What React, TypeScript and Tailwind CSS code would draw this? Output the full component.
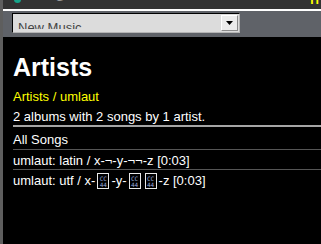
import React from "react";

function Tofu() {
  return (
    <span className="inline-block overflow-hidden w-[12px] h-[16px] border border-[#e8e8e8] align-[-4px] mx-[2px] pt-[2px] text-center leading-[5px] text-[6px] text-[#9ad] font-['DejaVu_Sans_Mono',monospace]">
      <span className="block">CC</span>
      <span className="block mt-[1px]">44</span>
    </span>
  );
}

export default function App() {
  return (
    <div className="w-[321px] h-[244px] overflow-hidden bg-black flex font-['Liberation_Sans',Arial,sans-serif]">
      <div className="w-[3px] shrink-0 bg-[#5e5e5e]" />
      <div className="flex-1 flex flex-col min-w-0">
        {/* top bar */}
        <div className="h-[9px] bg-[#333333] overflow-hidden flex items-start shrink-0">
          <div className="ml-[11px] -mt-[4px] w-[7px] h-[7px] rounded-full bg-[#17a58b]" />
          <div className="ml-[7px] -mt-[9px] text-[12px] leading-[12px] text-[#9a9a9a]">&lt;</div>
          <div className="ml-[20px] -mt-[9px] text-[12px] leading-[12px] text-[#9a9a9a]">G</div>
          <div className="ml-auto mr-[2px] -mt-[4px] text-[12px] leading-[9px] font-bold text-[#ffff00]">H</div>
        </div>
        <div className="h-[2px] bg-white shrink-0" />
        {/* select panel */}
        <div className="h-[26px] bg-[#5f6268] shrink-0 pl-[9px] pt-[2px]">
          <div className="w-[228px] h-[20px] bg-[#dcdcdc] border-t border-l border-black border-b border-r border-b-[#b5b5b5] border-r-[#b5b5b5] flex overflow-hidden">
            <div className="flex-1 h-[15px] overflow-hidden pl-[5px] pt-[6px] text-[13px] leading-[15px] text-[#444]">
              New Music
            </div>
            <div className="w-[17px] h-[16px] mt-[1px] mr-[1px] bg-[#ececec] border-t border-l border-white border-b border-r border-b-[#8a8a8a] border-r-[#8a8a8a] flex items-center justify-center">
              <svg width="7" height="4" viewBox="0 0 7 4">
                <path d="M0 0H7L3.5 4Z" fill="#000" />
              </svg>
            </div>
          </div>
        </div>
        {/* content */}
        <div className="flex-1 pt-[16px] pl-[10px] text-white">
          <div className="text-[25px] leading-[29px] font-bold">Artists</div>
          <div className="mt-[7px] text-[13px] leading-[15px] text-[#ffff00]">Artists / umlaut</div>
          <div className="mt-[5px] text-[13px] leading-[15px]">2 albums with 2 songs by 1 artist.</div>
          <div className="mt-[1px] h-[2px] bg-[#a5a5a5]" />
          <div className="pt-[5px] pb-[2px] text-[13px] leading-[15px] border-b border-[#555]">All Songs</div>
          <div className="pt-[3px] pb-[1px] text-[13px] leading-[15px] border-b border-[#555]">
            umlaut: latin / x-¬-y-¬¬-z [0:03]
          </div>
          <div className="pt-[3px] pb-[1px] text-[13px] leading-[15px]">
            umlaut: utf / x-<Tofu />-y-<Tofu /><Tofu />-z [0:03]
          </div>
        </div>
      </div>
    </div>
  );
}
